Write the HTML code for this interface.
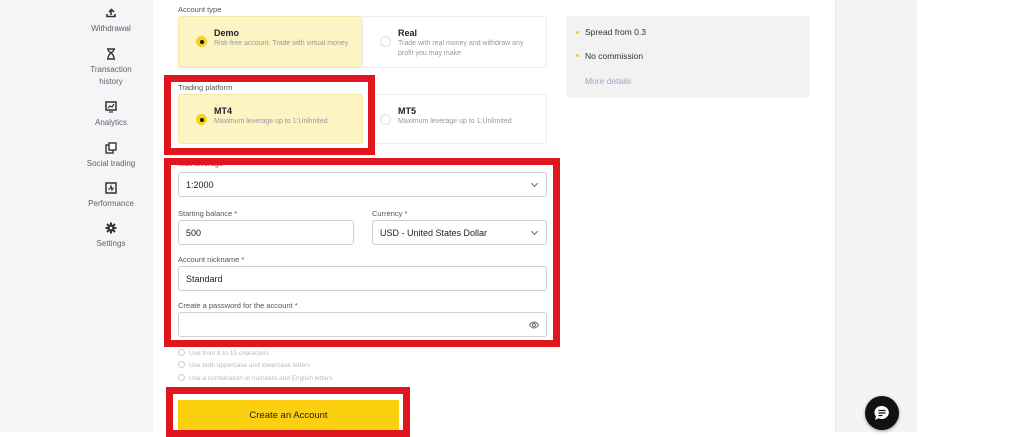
<!DOCTYPE html>
<html><head><meta charset="utf-8"><style>
*{box-sizing:border-box;margin:0;padding:0}
body{width:1024px;height:432px;overflow:hidden;background:#fff;font-family:"Liberation Sans",sans-serif;position:relative;color:#1e1e1e}
.a{position:absolute}
.side{left:0;top:0;width:153px;height:432px;background:#f3f5f7}
.ni{position:absolute;width:100px;left:61px;text-align:center;font-size:8px;color:#5f6368;line-height:12px}
.ni svg{display:block;margin:0 auto 4px}
.rs{left:835px;top:0;width:82px;height:432px;background:#f3f4f6;border-left:1px solid #e6e8ea}
.lbl{font-size:7.5px;color:#555}
.card{border:1px solid #ececec;border-radius:3px;background:#fff}
.card.sel{background:#fdf4c4;border-color:#f6e7a5}
.t{font-size:9px;font-weight:bold;color:#222}
.s{font-size:7px;color:#999;line-height:10px}
.rad{width:11px;height:11px;border-radius:50%;border:1px solid #e0e0e0;background:#fff}
.rad.on{background:#f7d21a;border:none}
.rad.on:after{content:"";position:absolute;left:3.5px;top:3.5px;width:4px;height:4px;border-radius:50%;background:#111}
.inp{border:1px solid #cfcfcf;border-radius:3px;background:#fff;font-size:9px;color:#222;padding-left:7px;display:flex;align-items:center}
.chev{position:absolute;right:9px;top:8px;width:5px;height:5px;border-right:1px solid #666;border-bottom:1px solid #666;transform:rotate(45deg)}
.red{border:7px solid #e0161e}
.hint{font-size:6.5px;color:#bbb}
.hint:before{content:"";display:inline-block;width:5px;height:5px;border:1px solid #ccc;border-radius:50%;margin-right:4px;vertical-align:-1px}
</style></head><body>
<div class="a side"></div>
<div class="ni" style="top:7px"><svg width="12" height="12" viewBox="0 0 12 12"><path d="M2 7v2.5h8V7" stroke="#333" stroke-width="1.6" fill="none"/><path d="M6 8V3M4 5l2.5-2.5L9 5" stroke="#333" stroke-width="1.6" fill="none"/></svg>Withdrawal</div>
<div class="ni" style="top:48px"><svg width="10" height="12" viewBox="0 0 10 12"><path d="M1 1h8M1 11h8M2 1c0 4 6 3 6 10M8 1c0 4-6 3-6 10" stroke="#333" stroke-width="1.4" fill="none"/></svg>Transaction<br>history</div>
<div class="ni" style="top:101px"><svg width="12" height="12" viewBox="0 0 12 12"><rect x="1" y="1" width="10" height="8" stroke="#333" stroke-width="1.5" fill="none"/><path d="M3 7l2-2 2 1 2-3M4 11h4" stroke="#333" stroke-width="1.2" fill="none"/></svg>Analytics</div>
<div class="ni" style="top:142px"><svg width="12" height="12" viewBox="0 0 12 12"><rect x="1" y="3" width="7" height="8" stroke="#333" stroke-width="1.4" fill="none"/><rect x="4" y="1" width="7" height="7" stroke="#333" stroke-width="1.4" fill="#fff"/></svg>Social trading</div>
<div class="ni" style="top:182px"><svg width="12" height="12" viewBox="0 0 12 12"><rect x="1" y="1" width="10" height="10" stroke="#333" stroke-width="1.5" fill="none"/><path d="M3 7h2l1-3 1 4 1-2h1" stroke="#333" stroke-width="1.1" fill="none"/></svg>Performance</div>
<div class="ni" style="top:222px"><svg width="12" height="12" viewBox="0 0 12 12"><circle cx="6" cy="6" r="3.5" fill="#333"/><path d="M6 0.5v11M0.5 6h11M2 2l8 8M10 2l-8 8" stroke="#333" stroke-width="2"/><circle cx="6" cy="6" r="1.3" fill="#f3f5f7"/></svg>Settings</div>

<div class="a rs"></div>

<div class="a lbl" style="left:178px;top:5px">Account type</div>
<div class="a card sel" style="left:178px;top:16px;width:185px;height:52px"></div>
<div class="a rad on" style="left:196px;top:36px"></div>
<div class="a t" style="left:214px;top:28px">Demo</div>
<div class="a s" style="left:214px;top:39px">Risk-free account. Trade with virtual money</div>
<div class="a card" style="left:362px;top:16px;width:185px;height:52px"></div>
<div class="a rad" style="left:380px;top:36px"></div>
<div class="a t" style="left:398px;top:28px">Real</div>
<div class="a s" style="left:398px;top:39px;width:140px">Trade with real money and withdraw any profit you may make</div>

<div class="a" style="left:566px;top:16px;width:244px;height:82px;background:#f2f2f2;border-radius:3px"></div>
<div class="a" style="left:576px;top:31px;width:3px;height:3px;border-radius:50%;background:#f2c94c"></div>
<div class="a" style="left:585px;top:27px;font-size:8.5px;color:#333">Spread from 0.3</div>
<div class="a" style="left:576px;top:54px;width:3px;height:3px;border-radius:50%;background:#f2c94c"></div>
<div class="a" style="left:585px;top:51px;font-size:8.5px;color:#333">No commission</div>
<div class="a" style="left:585px;top:76px;font-size:8.5px;color:#9aa6c8">More details</div>

<div class="a red" style="left:164px;top:75px;width:211px;height:80px"></div>
<div class="a lbl" style="left:178px;top:83px">Trading platform</div>
<div class="a card sel" style="left:178px;top:94px;width:185px;height:50px"></div>
<div class="a rad on" style="left:196px;top:114px"></div>
<div class="a t" style="left:214px;top:106px">MT4</div>
<div class="a s" style="left:214px;top:117px">Maximum leverage up to 1:Unlimited</div>
<div class="a card" style="left:375px;top:94px;width:172px;height:50px;border-left:none"></div>
<div class="a rad" style="left:380px;top:114px"></div>
<div class="a t" style="left:398px;top:106px">MT5</div>
<div class="a s" style="left:398px;top:117px">Maximum leverage up to 1:Unlimited</div>

<div class="a lbl" style="left:178px;top:159px">Max leverage</div>
<div class="a red" style="left:164px;top:158px;width:396px;height:189px;border-top-width:7px"></div>
<div class="a inp" style="left:178px;top:172px;width:369px;height:25px">1:2000<span class="chev"></span></div>
<div class="a lbl" style="left:178px;top:209px">Starting balance *</div>
<div class="a inp" style="left:178px;top:220px;width:176px;height:25px">500</div>
<div class="a lbl" style="left:372px;top:209px">Currency *</div>
<div class="a inp" style="left:372px;top:220px;width:175px;height:25px">USD - United States Dollar<span class="chev"></span></div>
<div class="a lbl" style="left:178px;top:255px">Account nickname *</div>
<div class="a inp" style="left:178px;top:266px;width:369px;height:25px">Standard</div>
<div class="a lbl" style="left:178px;top:301px">Create a password for the account *</div>
<div class="a inp" style="left:178px;top:312px;width:369px;height:25px"><svg style="position:absolute;right:7px;top:8px" width="10" height="8" viewBox="0 0 10 8"><path d="M0.5 4C3 0 7 0 9.5 4 7 8 3 8 0.5 4z" stroke="#666" fill="none" stroke-width="0.9"/><circle cx="5" cy="4" r="1.5" stroke="#666" fill="none" stroke-width="0.9"/></svg></div>

<div class="a hint" style="left:178px;top:349px">Use from 8 to 15 characters</div>
<div class="a hint" style="left:178px;top:361px">Use both uppercase and lowercase letters</div>
<div class="a hint" style="left:178px;top:374px">Use a combination of numbers and English letters</div>

<div class="a red" style="left:166px;top:387px;width:244px;height:50px"></div>
<div class="a" style="left:178px;top:400px;width:221px;height:30px;background:#fcd00f;font-size:9.5px;color:#222;display:flex;align-items:center;justify-content:center">Create an Account</div>

<div class="a" style="left:865px;top:396px;width:34px;height:34px;border-radius:50%;background:#111;box-shadow:0 1px 3px rgba(0,0,0,.4)"></div>
<svg class="a" style="left:873px;top:404px" width="18" height="18" viewBox="0 0 18 18"><path d="M9 2a7 6.5 0 1 1-3.5 12.2L2 16l1-3.5A7 6.5 0 0 1 9 2z" fill="#fff"/><path d="M5.5 6.5h7M5.5 9h7M5.5 11.5h4" stroke="#111" stroke-width="1.2"/></svg>
</body></html>
